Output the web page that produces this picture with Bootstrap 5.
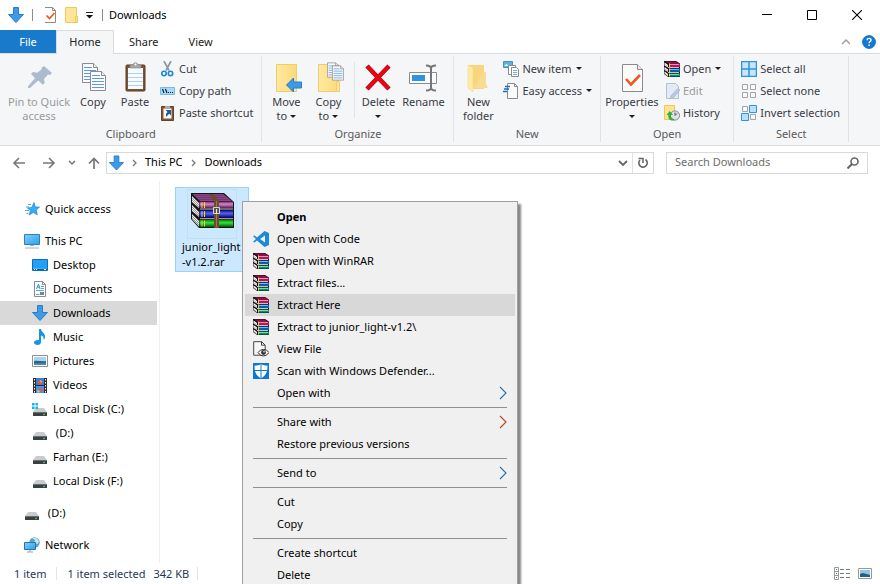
<!DOCTYPE html>
<html lang="en">
<head>
<meta charset="utf-8">
<meta name="viewport" content="width=device-width, initial-scale=1">
<title>Downloads</title>
<link href="https://cdn.jsdelivr.net/npm/bootstrap@5.3.0/dist/css/bootstrap.min.css" rel="stylesheet">
<style>
body { font-family: "Noto Sans", "Open Sans", sans-serif; font-size: 11px; line-height: 13px; color: #000; background: #fff; }
button, input { font: inherit; }
svg { display: block; flex: none; }
.plain { border: 0; background: none; padding: 0; color: inherit; }
.titlebar { height: 30px; padding: 0 1px 0 8px; }
.caption-text { padding: 0 0 2px 6px; }
.vline { width: 1px; height: 12px; background: #8c8c8c; }
.win-btn { width: 45px; height: 30px; }
.tab-row { height: 24px; box-shadow: inset 0 -1px #dadbdc; }
.tab-link { height: 23px; color: #222; text-decoration: none; display: flex; align-items: center; justify-content: center; padding: 0 15px; }
.tab-file { background: #1979ca; color: #fff; width: 56px; }
.tab-active { background: #f5f6f7; border: 1px solid #dadbdc; border-bottom: 0; height: 24px; width: 58px; padding: 0 0 2px; }
.ribbon { background: #f5f6f7; border-bottom: 1px solid #dadbdc; height: 92px; padding-top: 2px; color: #3a3a44; }
.ribbon-group { border-right: 1px solid #e2e3e4; height: 86px; display: flex; flex-direction: column; }
.ribbon-tools { height: 71px; padding: 2px 4px 0 3px; }
.group-name { text-align: center; color: #5a5a5a; line-height: 16px; }
.tool-big { display: flex; flex-direction: column; align-items: center; gap: 1px; text-align: center; padding-top: 2px; line-height: 14px; }
.w36 { width: 36px; } .w38 { width: 38px; } .w42 { width: 42px; } .w48 { width: 48px; } .w52 { width: 52px; } .w56 { width: 56px; } .w72 { width: 72px; }
.tool-small { display: flex; align-items: center; gap: 3px; height: 22px; padding-bottom: 2px; white-space: nowrap; }
.tool-small svg, .side a svg, .ctx-item svg { margin-top: 2px; }
.tool-off { color: #9a9a9a; }
.tool-line { width: 1px; height: 56px; background: #e2e3e4; margin: 4px 4px 0 5px; }
.caret { display: inline-block; border: 3px solid transparent; border-top-color: #1e1e1e; border-bottom: 0; vertical-align: 2px; margin-left: 3px; }
.tool-small .caret { margin-left: 1px; }
.addr-row { height: 35px; padding: 0 12px 2px; }
.addr-row a { padding-bottom: 2px; }
.addr-box { border: 1px solid #d9d9d9; height: 22px; }
.path-box { margin-left: 6px; padding-left: 2px; }
.search-box { width: 202px; margin-left: 12px; }
.search-box input { border: 0; outline: 0; min-width: 0; padding: 0 0 2px 8px; color: #000; }
.search-box input::placeholder { color: #6d6d6d; opacity: 1; }
.side { width: 160px; border-right: 1px solid #f0f0f0; padding-top: 16px; }
.side a { display: flex; align-items: center; gap: 5px; height: 24px; padding: 0 0 2px 32px; margin-right: 2px; color: #000; text-decoration: none; white-space: pre; }
.side a.top-level { padding-left: 24px; }
.side a.gap-above { margin-top: 8px; }
.side a.current { background: #d9d9d9; }
.files { padding: 6px 15px; }
.file-tile { width: 74px; border: 1px solid #99d1ff; background: #cce8ff; text-align: left; padding: 1px 0 2px 6px; line-height: 15px; }
.file-pic { border: 1px solid #c3def0; width: 50px; height: 50px; margin-left: 5px; padding: 3px 0 0 3px; }
.status { height: 21px; padding: 0 8px 0 14px; color: #1e395b; }
.status .vline { height: 13px; background: #e4e4e4; }
.status .first-line { margin: 0 10px; }
.ctx { position: absolute; left: 242px; top: 201px; width: 276px; background: #f0f0f0; border: 1px solid #a0a0a0; padding: 4px 2px 12px; box-shadow: 3px 3px 2px #00000078; }
.ctx-item { display: flex; align-items: center; gap: 8px; width: 100%; height: 22px; padding: 0 8px 2px; text-align: left; }
.ctx-item .slot { width: 16px; height: 16px; flex: none; }
.ctx-item.hot { background: #d8d8d8; }
.ctx hr { margin: 3px 8px; border-color: #8f8f8f; opacity: 1; }
</style>
<script src="https://cdn.jsdelivr.net/npm/bootstrap@5.3.0/dist/js/bootstrap.bundle.min.js"></script>
</head>
<body class="vh-100 overflow-hidden position-relative">
<svg width="0" height="0" class="position-absolute" aria-hidden="true">
<defs>
<linearGradient id="gBlue" x1="0" y1="0" x2="1" y2="1"><stop offset="0" stop-color="#7fd0fb"/><stop offset="1" stop-color="#2aa0ee"/></linearGradient>
<linearGradient id="gFold" x1="0" y1="0" x2="1" y2="0"><stop offset="0" stop-color="#ffe9a2"/><stop offset="1" stop-color="#fbd978"/></linearGradient>
<linearGradient id="gPurple" x1="0" y1="0" x2="0" y2="1"><stop offset="0" stop-color="#6d2468"/><stop offset=".4" stop-color="#d08ac8"/><stop offset="1" stop-color="#5c1856"/></linearGradient>
<linearGradient id="gNavy" x1="0" y1="0" x2="0" y2="1"><stop offset="0" stop-color="#1414a8"/><stop offset=".4" stop-color="#4f62ff"/><stop offset="1" stop-color="#08086a"/></linearGradient>
<linearGradient id="gGreen" x1="0" y1="0" x2="0" y2="1"><stop offset="0" stop-color="#0a860a"/><stop offset=".4" stop-color="#2fe83a"/><stop offset="1" stop-color="#045004"/></linearGradient>
<symbol id="down" viewBox="0 0 16 16"><path d="M5.5.5h5v7h5L8 15.5.5 7.5h5z" fill="#3c9be8" stroke="#2b7cc4"/></symbol>
<symbol id="books" viewBox="0 0 16 16">
<path d="M0 0h12l4 2.500V16H4l-4-3z" fill="#1a1014"/>
<path d="M1 .5h10.500l3.500 2H5z" fill="#8e1048"/>
<path d="M5 2.500h11V6H5z" fill="#b8145a"/><path d="M6 3h9v1H6z" fill="#f58ab4"/>
<path d="M5 7.500h11V11H5z" fill="#0d5cab"/><path d="M6 8h9v1H6z" fill="#6fbcf4"/>
<path d="M5 12.500h11v3H5z" fill="#0b8f63"/><path d="M6 13h9v1H6z" fill="#66e2b6"/>
<path d="M.5 1.500L4 4v2.500L.5 4.500zM.5 6L4 8.500V11L.5 9zM.5 10.500L4 13v2.500l-3.500-3z" fill="#fff"/>
<path d="M4 6.500h11M4 11.500h11" stroke="#f2f2f2" stroke-width=".8"/>
<path d="M5 2.500h1V6H5zM5 7.500h1V11H5zM5 12.500h1v3H5z" fill="#f5cf3b"/>
<path d="M0 3l4 2.500M0 7.500L4 10M0 12l4 2.500" stroke="#777" stroke-width=".5"/>
</symbol>
<symbol id="drive" viewBox="0 0 16 16"><path d="M4 7h8l3 4H1z" fill="#c9ccce"/><path d="M1 11h14v4H1z" fill="#3b3f42"/><path d="M1 11h14v1H1z" fill="#6b6f72"/><circle cx="12" cy="13.500" r=".8" fill="#53f05d"/></symbol>
<symbol id="page" viewBox="0 0 12 16"><path d="M.5.5h8l3 3v12H.5z" fill="#fff" stroke="#8b8b8b"/><path d="M8.500.5v3h3" fill="none" stroke="#8b8b8b"/></symbol>
<symbol id="sheet" viewBox="0 0 16 20"><path d="M.5.5h11l4 4v15H.5z" fill="#fbfbfb" stroke="#8b8b8b"/><path d="M11.500.5v4h4" fill="#eee" stroke="#8b8b8b"/><path d="M2 4.500h8M2 7.500h12M2 10.500h12M2 13.500h12M2 16.500h12" stroke="#5e97e4"/></symbol>
<symbol id="chev" viewBox="0 0 8 14"><path d="M1 1l6 6-6 6" fill="none" stroke="currentColor" stroke-width="1.100"/></symbol>
</defs>
</svg>

<div class="d-flex flex-column h-100">
<header class="titlebar d-flex align-items-center">
  <svg width="16" height="16"><use href="#down"/></svg>
  <span class="vline ms-2"></span>
  <button class="plain ms-2 ps-1" aria-label="Properties"><svg width="11" height="16"><use href="#page" x="-1" width="12" height="16"/><path d="M1.500 8.500l3 3 5-5.500" fill="none" stroke="#e8541e" stroke-width="1.700"/></svg></button>
  <button class="plain ms-2" aria-label="New folder"><svg width="14" height="16"><path d="M1.500.5h11v15h-11z" fill="#ffe59a" stroke="#efc95c"/><path d="M11.500 9.500h2v6h-2z" fill="#ffe59a" stroke="#efc95c"/></svg></button>
  <button class="plain ms-2" aria-label="Customize Quick Access Toolbar"><svg width="8" height="8"><path d="M0 1.500h7" stroke="#222"/><path d="M0 4h7l-3.500 3.500z" fill="#111"/></svg></button>
  <span class="vline ms-2"></span>
  <span class="caption-text me-auto">Downloads</span>
  <button class="plain win-btn d-flex align-items-center justify-content-center" aria-label="Minimize"><svg width="10" height="10"><path d="M0 4.500h10" stroke="#000"/></svg></button>
  <button class="plain win-btn d-flex align-items-center justify-content-center" aria-label="Maximize"><svg width="10" height="10"><path d="M.5.5h9v9h-9z" fill="none" stroke="#000"/></svg></button>
  <button class="plain win-btn d-flex align-items-center justify-content-center" aria-label="Close"><svg width="10" height="10"><path d="M0 0l10 10M10 0L0 10" stroke="#000" stroke-width="1.100"/></svg></button>
</header>

<nav class="tab-row d-flex" aria-label="Ribbon tabs">
  <a class="tab-link tab-file" href="#">File</a>
  <a class="tab-link tab-active" href="#">Home</a>
  <a class="tab-link" href="#">Share</a>
  <a class="tab-link" href="#">View</a>
  <button class="plain ms-auto me-2 pe-1" aria-label="Collapse ribbon"><svg width="9" height="8"><path d="M1 6l4-4 4 4" fill="none" stroke="#9a9a9a" stroke-width="1.400"/></svg></button>
  <button class="plain me-1" aria-label="Help"><svg width="14" height="14"><circle cx="7" cy="7" r="6.500" fill="#0f7ad8" stroke="#0a5ea9" stroke-width=".7"/><path d="M5 5.200c.2-2.600 4.200-2.300 4 0-.1 1.300-1.900 1.400-1.900 3M7.100 9.600v1.500" fill="none" stroke="#fff" stroke-width="1.400"/></svg></button>
</nav>

<section class="ribbon d-flex flex-shrink-0" aria-label="Home ribbon">
  <div class="ribbon-group">
    <div class="ribbon-tools d-flex align-items-start">
      <button class="plain tool-big w72 tool-off"><svg width="32" height="34"><path d="M21 6l8 7-2 2-2-.6-4 4.600.8 4-2 1.800-4.600-4.400L7 28H5l0-1.800 7-8-4-4.400 2-1.800 4.200.8 4.600-3.600-.2-1.400z" fill="#adbbcf"/></svg><span>Pin to Quick<br>access</span></button>
      <button class="plain tool-big w36"><svg width="32" height="34"><use href="#sheet" x="5" y="3" width="16" height="20"/><use href="#sheet" x="13" y="11" width="16" height="20"/></svg>Copy</button>
      <button class="plain tool-big w48"><svg width="32" height="34"><rect x="7" y="5" width="19" height="26" rx="1" fill="#7b5534" stroke="#5c3c20"/><path d="M9 8h15v21H9z" fill="#f8fbfd"/><path d="M9 13.500h15M9 17.500h15M9 21.500h15M9 25.500h15" stroke="#a9d4ec"/><path d="M11 8V5h3c0-3 5-3 5 0h3v3z" fill="#a5a8ab" stroke="#85888b" stroke-width=".6"/><circle cx="16.500" cy="4.500" r="1" fill="#fff"/></svg>Paste</button>
      <div class="pe-1">
        <button class="plain tool-small"><svg width="17" height="16"><path d="M5 0l5 9.500M12 0L7 9.500" stroke="#8a97a5" stroke-width="1.700"/><circle cx="5" cy="12.500" r="2.200" fill="none" stroke="#1988cf" stroke-width="1.600"/><circle cx="11.500" cy="12.500" r="2.200" fill="none" stroke="#1988cf" stroke-width="1.600"/></svg>Cut</button>
        <button class="plain tool-small"><svg width="17" height="16"><path d="M1.500 4.500h14v7h-14z" fill="#a9d9f8" stroke="#79b9e2"/><path d="M3.500 6l1.500 4M6.500 6L8 10" stroke="#123" stroke-width="1.200"/><path d="M9 9.500h1M11 9.500h1M13 9.500h1" stroke="#123"/></svg>Copy path</button>
        <button class="plain tool-small"><svg width="17" height="16"><path d="M2.500 1.500h12v14h-12z" fill="#80573a" stroke="#63432b"/><path d="M4.500 3.500h8v10h-8z" fill="#fff"/><path d="M6 3V1h5v2z" fill="#aaa"/><path d="M6.500 5H12v5.500l-1.800-1.700L7 12V8.800l1.500-1.900z" fill="#29599c"/></svg>Paste shortcut</button>
      </div>
    </div>
    <div class="group-name">Clipboard</div>
  </div>

  <div class="ribbon-group">
    <div class="ribbon-tools d-flex align-items-start">
      <button class="plain tool-big w42"><svg width="32" height="34"><path d="M6.500 4.500h20v27h-20z" fill="url(#gFold)" stroke="#efcc6d"/><path d="M23.500 20.500h3v11h-3z" fill="#ffe59a" stroke="#efcc6d"/><path d="M16.500 25l7-7v4h8v6h-8v4z" fill="#3c9be8" stroke="#2b7cc4"/></svg><span>Move<br>to<span class="caret"></span></span></button>
      <button class="plain tool-big w42"><svg width="32" height="34"><path d="M6.500 4.500h20v27h-20z" fill="url(#gFold)" stroke="#efcc6d"/><path d="M24.500 21.500h3v10h-3z" fill="#ffe59a" stroke="#efcc6d"/><use href="#sheet" x="15" y="2" width="12" height="16"/><use href="#sheet" x="20" y="5" width="12" height="16"/></svg><span>Copy<br>to<span class="caret"></span></span></button>
      <span class="tool-line"></span>
      <button class="plain tool-big w38"><svg width="32" height="34"><path d="M5 6l22 23M27 6L5 29" stroke="#b5000c" stroke-width="4.500"/><path d="M5.500 6.500l21 22M26.500 6.500l-21 22" stroke="#e60614" stroke-width="3.500"/></svg><span>Delete<br><span class="caret m-0"></span></span></button>
      <button class="plain tool-big w52"><svg width="32" height="34"><path d="M2.500 12.500h27v11h-27z" fill="#fcfcfc" stroke="#8c8c8c"/><path d="M5 15h13v6H5z" fill="#2f92e4"/><path d="M19 5.500c3 0 5 .5 5 3 0-2.500 2-3 5-3M24 8v20M19 30.500c3 0 5-.5 5-3 0 2.500 2 3 5 3" fill="none" stroke="#767676" stroke-width="2"/></svg>Rename</button>
    </div>
    <div class="group-name">Organize</div>
  </div>

  <div class="ribbon-group">
    <div class="ribbon-tools d-flex align-items-start">
      <button class="plain tool-big w42"><svg width="32" height="34"><path d="M7 5h15v24H7z" fill="#f9d67b"/><path d="M21 12h3v12l2 4H12z" fill="#f8dc91"/><path d="M6 5l5 3v24l-5-4z" fill="#ffeaa9" stroke="#f6d880" stroke-width=".6"/></svg><span>New<br>folder</span></button>
      <div class="ps-1 pe-1">
        <button class="plain tool-small"><svg width="16" height="16"><path d="M.5.5h9v6h-9z" fill="#5bb3e4" stroke="#4a90b8"/><path d="M1 5l2.500-2L6 5z" fill="#e7f7ff"/><path d="M5.500 4.500h7v9h-7z" fill="#fff" stroke="#8b8b8b"/><path d="M8.500 6.500h5l2 2v7h-7z" fill="#fff" stroke="#8b8b8b"/><path d="M10 9.500h4M10 11.500h4M10 13.500h4" stroke="#7aa9e6"/></svg>New item <span class="caret"></span></button>
        <button class="plain tool-small"><svg width="16" height="16"><path d="M4.500.5h7l3 3v12h-10z" fill="#fafafa" stroke="#8b8b8b"/><path d="M11.500.5v3h3" fill="none" stroke="#8b8b8b"/><path d="M2 3.500h5M1 6h5M0 8.500h4" stroke="#1b6eb8" stroke-width="1.300"/></svg>Easy access <span class="caret"></span></button>
      </div>
    </div>
    <div class="group-name">New</div>
  </div>

  <div class="ribbon-group">
    <div class="ribbon-tools d-flex align-items-start">
      <button class="plain tool-big w56"><svg width="32" height="34"><path d="M6.500 4.500h15l5 5v22h-20z" fill="#fbfbfb" stroke="#8b8b8b"/><path d="M21.500 4.500v5h5" fill="#e8e8e8" stroke="#8b8b8b"/><path d="M10 19l5 5.500 9-9.500" fill="none" stroke="#f2581c" stroke-width="2.600"/></svg><span>Properties<br><span class="caret m-0"></span></span></button>
      <div class="ps-1 pe-2">
        <button class="plain tool-small"><svg width="16" height="16"><use href="#books"/></svg>Open <span class="caret"></span></button>
        <button class="plain tool-small tool-off"><svg width="16" height="16"><path d="M2.500.5h9l3 3v12h-12z" fill="#e3eaf5" stroke="#b3c1d8"/><path d="M14 5.500l2 1.500-6.500 7.500-3 1 .7-3z" fill="#b9c9e2" stroke="#9fb2d0" stroke-width=".7"/></svg>Edit</button>
        <button class="plain tool-small"><svg width="16" height="16"><path d="M.5.5h10v14H.5z" fill="#ffe48f" stroke="#e9c765"/><circle cx="11" cy="10.500" r="4.600" fill="#dfe2e4" stroke="#8a8d90"/><path d="M11 7.500v3l2-2" fill="none" stroke="#555"/><path d="M10 15.500C5 16 3.800 12.500 4.500 10H2.500l3.200-4L9 10H7c-.4 2 .5 3.800 3 4z" fill="#2faf3c"/></svg>History</button>
      </div>
    </div>
    <div class="group-name">Open</div>
  </div>

  <div class="ribbon-group">
    <div class="ribbon-tools d-flex align-items-start">
      <div class="ps-1 pe-1">
        <button class="plain tool-small"><svg width="16" height="16"><path d="M.5.5h15v15H.5zM8 .5v15M.5 8h15" fill="#c8e5fb" stroke="#2f92e0" stroke-width="1.500"/></svg>Select all</button>
        <button class="plain tool-small"><svg width="16" height="16"><path d="M1.500 1.500h5v5h-5zM9.500 1.500h5v5h-5zM1.500 9.500h5v5h-5zM9.500 9.500h5v5h-5z" fill="#fafafa" stroke="#a3a3a3"/></svg>Select none</button>
        <button class="plain tool-small"><svg width="16" height="16"><path d="M1.500 1.500h5v5h-5zM9.500 9.500h5v5h-5z" fill="#fafafa" stroke="#a3a3a3"/><path d="M8.500.5h7v7h-7zM.5 8.500h7v7h-7z" fill="#b9dffc" stroke="#2f92e0"/></svg>Invert selection</button>
      </div>
    </div>
    <div class="group-name">Select</div>
  </div>
</section>

<div class="addr-row d-flex align-items-center flex-shrink-0">
  <button class="plain" aria-label="Back"><svg width="14" height="12"><path d="M13 6H2M7 1L2 6l5 5" fill="none" stroke="#777" stroke-width="1.600"/></svg></button>
  <button class="plain ms-3" aria-label="Forward"><svg width="14" height="12"><path d="M1 6h11M7 1l5 5-5 5" fill="none" stroke="#777" stroke-width="1.600"/></svg></button>
  <button class="plain ms-2 ps-1" aria-label="Recent locations"><svg width="8" height="6"><path d="M1 1l3 3 3-3" fill="none" stroke="#777" stroke-width="1.500"/></svg></button>
  <button class="plain ms-2 ps-1" aria-label="Up"><svg width="12" height="12"><path d="M6 12V2M1 6.500l5-5 5 5" fill="none" stroke="#777" stroke-width="1.700"/></svg></button>
  <div class="addr-box path-box d-flex align-items-center flex-grow-1">
    <svg width="15" height="16"><use href="#down"/></svg>
    <svg class="mx-2" width="5" height="8"><path d="M1 1l3 3-3 3" fill="none" stroke="#777" stroke-width="1.300"/></svg>
    <a href="#" class="text-black text-decoration-none">This PC</a>
    <svg class="mx-2" width="6" height="8"><path d="M1 1l3 3-3 3" fill="none" stroke="#777" stroke-width="1.300"/></svg>
    <a href="#" class="text-black text-decoration-none me-auto">Downloads</a>
    <button class="plain px-1" aria-label="Previous locations"><svg width="10" height="8"><path d="M1 2l4 4 4-4" fill="none" stroke="#666" stroke-width="1.800"/></svg></button>
    <button class="plain px-1 h-100 border-start" aria-label="Refresh"><svg width="12" height="12"><path d="M8.500 2.500A4.200 4.200 0 1 1 3 3" fill="none" stroke="#666" stroke-width="1.600"/><path d="M1.500 1.500h4.500V6" fill="none" stroke="#666" stroke-width="1.500"/></svg></button>
  </div>
  <label class="addr-box search-box d-flex align-items-center pe-2">
    <input class="flex-grow-1" type="search" placeholder="Search Downloads" aria-label="Search Downloads">
    <svg width="12" height="12"><circle cx="7.500" cy="4.500" r="3.500" fill="none" stroke="#666" stroke-width="1.600"/><path d="M5 7l-4.500 4.500" stroke="#666" stroke-width="2"/></svg>
  </label>
</div>

<main class="d-flex flex-grow-1 overflow-hidden">
  <nav class="side flex-shrink-0" aria-label="Locations">
    <a class="top-level" href="#"><svg width="16" height="16"><path d="M10 1.500l1.200 4.400 4.300.2-3.300 3 1.100 4.700-4-2.400L5.200 14l1.200-4.400L3.500 7l4.300-.6z" fill="#35aef2" stroke="#1d84cb" stroke-width=".7"/><path d="M4 3.500h3M2 6h3M1 9.500h4M2.500 12.500h2" stroke="#4da9df"/></svg>Quick access</a>
    <a class="top-level gap-above" href="#"><svg width="16" height="16"><path d="M.5 1.500h15v10H.5z" fill="url(#gBlue)" stroke="#357fae"/><path d="M6 12.500h4M1 15h14" stroke="#9bb0bf"/></svg>This PC</a>
    <a href="#"><svg width="16" height="16"><path d="M.5 2.500h15v11H.5z" fill="url(#gBlue)" stroke="#0c6eb8"/><path d="M1 3h14v8H1z" fill="#1fa2f6"/><path d="M1 12.500h14" stroke="#0b5f9f"/><path d="M2 12.500h1M4 12.500h1M12 12.500h2" stroke="#fff"/></svg>Desktop</a>
    <a href="#"><svg width="16" height="16"><use href="#page" x="2" y="0" width="12" height="16"/><path d="M4.500 8l2-5 1.500 5M5 6h2.500" fill="none" stroke="#2f92d8"/><path d="M9 5.500h3M9 7.500h3M4 9.500h8M4 13.500h3.500" stroke="#52aadf"/><path d="M8 11h4v3H8z" fill="#6b8d7f"/></svg>Documents</a>
    <a class="current" href="#"><svg width="16" height="16"><use href="#down"/></svg>Downloads</a>
    <a href="#"><svg width="16" height="16"><path d="M7 0h2c0 3 4.500 4 4 8-.2 1.500-.8 2.500-1.500 3 .7-3-1-4-2.500-4.500V13c0 2-1.500 3-3.500 3S2 15 2 13.500 4 10.700 7 11z" fill="#1593e6"/></svg>Music</a>
    <a href="#"><svg width="16" height="16"><path d="M.5 2.500h15v11H.5z" fill="#fff" stroke="#8f8f8f"/><path d="M2 4h12v8H2z" fill="#a8d3f5"/><path d="M2 8c4-1 8 1 12 0v2H2z" fill="#2e6b68"/><path d="M2 10h12v2H2z" fill="#3f86c5"/></svg>Pictures</a>
    <a href="#"><svg width="16" height="16"><path d="M1 1h14v15H1z" fill="#2d2d2d"/><path d="M4 1h8v7H4z" fill="#3c7be0"/><path d="M4 9h8v7H4z" fill="#4e8ff0"/><path d="M5 5l3-2 3 3-3 1.500zM7 12l3-2 1 4H8z" fill="#e2602a"/><path d="M8 3l2 1-1 2zM5 13l3 1-2 2z" fill="#f2d23b"/><path d="M2.500 2v14M13.500 2v14" stroke="#fff" stroke-dasharray="1.500 1.500"/></svg>Videos</a>
    <a href="#"><svg width="16" height="16"><use href="#drive"/><path d="M0 2h2.600v2.500H0zM3.500 2H6v2.500H3.500zM0 5.500h2.600V8H0zM3.500 5.500H6V8H3.500z" fill="#16b1f2"/></svg>Local Disk (C:)</a>
    <a href="#"><svg width="16" height="16"><use href="#drive"/></svg> (D:)</a>
    <a href="#"><svg width="16" height="16"><use href="#drive"/></svg>Farhan (E:)</a>
    <a href="#"><svg width="16" height="16"><use href="#drive"/></svg>Local Disk (F:)</a>
    <a class="top-level gap-above" href="#"><svg width="16" height="16"><use href="#drive"/></svg> (D:)</a>
    <a class="top-level gap-above" href="#"><svg width="16" height="16"><circle cx="10.500" cy="5.500" r="5.200" fill="#5a9fc4"/><path d="M8 1l3 2-1 3 4 1 1-3-3-3.500z" fill="#c5e5f3"/><path d="M.5 5.500h11v7H.5z" fill="url(#gBlue)" stroke="#2874a8"/><path d="M3 15h6M6 13v2" stroke="#8aa7ba"/></svg>Network</a>
  </nav>
  <div class="files flex-grow-1">
    <button class="plain file-tile d-block"><span class="file-pic d-block"><svg width="43" height="36" viewBox="0 0 43 36">
      <path d="M0 0h33l10 9v26H8L0 26z" fill="#1b1414"/>
      <path d="M1.500 1H32l9 7H9z" fill="#8a4585"/><path d="M4 2.500h28M6 4.500h29M8 6.500h30" stroke="#6f2d6b" stroke-width=".7"/>
      <path d="M8.500 8.500H42v6.500H8.500z" fill="url(#gPurple)"/>
      <path d="M8.500 17.500H42v7H8.500z" fill="url(#gNavy)"/>
      <path d="M8.500 27H42v7H8.500z" fill="url(#gGreen)"/>
      <path d="M1 3l7 7v5L1 9zM1 12l7 7v5l-7-6zM1 21l7 7v5.500L1 26z" fill="#ececec"/>
      <path d="M1 5l7 7M1 7l7 7M1 14l7 7M1 16l7 7M1 23l7 7M1 25l7 7" stroke="#777" stroke-width=".7"/>
      <path d="M9 16h33M9 25.700h33" stroke="#bfb8c0"/>
      <path d="M11 9v6M13.500 9v6M11 18v6M13.500 18v6M11 27.500v6M13.500 27.500v6" stroke="#f1d23a"/>
      <path d="M18 1h4l6 7v7h-5V8z" fill="#6c4a2d"/><path d="M23 20h5v15h-5z" fill="#6c4a2d"/><path d="M25.500 8v26" stroke="#a37748"/>
      <path d="M22.500 14.500h6v6h-6z" fill="#55504a" stroke="#d8d8d0"/><path d="M25.500 16v4" stroke="#e8e8e0" stroke-width="1.200"/>
    </svg></span>junior_light<br>-v1.2.rar</button>
  </div>
</main>

<footer class="status d-flex align-items-center flex-shrink-0">
  <span>1 item</span><span class="vline first-line"></span><span>1 item selected</span><span class="ms-2">342 KB</span><span class="vline ms-2"></span>
  <button class="plain ms-auto me-2" aria-label="Details view"><svg width="16" height="13"><path d="M.5.5h4v12h-4zM.5 4.500h4M.5 8.500h4" fill="none" stroke="#999"/><path d="M2 2.500h1" stroke="#3c9b55"/><path d="M2 6.500h1" stroke="#27d"/><path d="M2 10.500h1" stroke="#d33"/><path d="M6 2.500h4M12 2.500h4M6 6.500h4M12 6.500h4M6 10.500h4M12 10.500h4" stroke="#777"/></svg></button>
  <button class="plain" aria-label="Large icons view"><svg width="14" height="11"><path d="M.5.5h13v10H.5z" fill="#fff" stroke="#999"/><path d="M2 2h10v7H2z" fill="#8cc4f2"/><path d="M2 6l3-1 7 2v2H2z" fill="#286078"/></svg></button>
</footer>
</div>

<div class="ctx" role="menu">
  <button class="plain ctx-item fw-bold" role="menuitem"><span class="slot"></span>Open</button>
  <button class="plain ctx-item" role="menuitem"><svg width="16" height="16"><path d="M11.500 0L16 2v12l-4.500 2L4 9.500 1.500 11.500 0 10.700 3 8 0 5.300l1.500-.8L4 6.500zM12 4.500L7 8l5 3.500z" fill="#1c8ad6" fill-rule="evenodd"/></svg>Open with Code</button>
  <button class="plain ctx-item" role="menuitem"><svg width="16" height="16"><use href="#books"/></svg>Open with WinRAR</button>
  <button class="plain ctx-item" role="menuitem"><svg width="16" height="16"><use href="#books"/></svg>Extract files...</button>
  <button class="plain ctx-item hot" role="menuitem"><svg width="16" height="16"><use href="#books"/></svg>Extract Here</button>
  <button class="plain ctx-item" role="menuitem"><svg width="16" height="16"><use href="#books"/></svg>Extract to junior_light-v1.2\</button>
  <button class="plain ctx-item" role="menuitem"><svg width="16" height="16"><path d="M.7.7h8l3.500 3.500v10H.7z" fill="#f6f6f6" stroke="#444"/><path d="M8.500.7v3.500h3.500" fill="none" stroke="#444"/><path d="M5 11.500c3-4 8-4 11 0-3 4.500-8 4.500-11 0z" fill="#f4f4f4" stroke="#333"/><circle cx="10.500" cy="11.500" r="2.400" fill="#333"/><circle cx="11" cy="10.700" r=".8" fill="#fff"/></svg>View File</button>
  <button class="plain ctx-item" role="menuitem"><svg width="16" height="16"><path d="M0 0h16v16H0z" fill="#0a78d7"/><path d="M8 1c1.500 1.200 4 1.700 6.500 1.700C14.500 9 13 12.500 8 15.200 3 12.500 1.500 9 1.500 2.700 4 2.700 6.500 2.200 8 1z" fill="#fff"/><path d="M8 1v14.500M1 7.500h14" stroke="#0a78d7"/></svg>Scan with Windows Defender...</button>
  <button class="plain ctx-item" role="menuitem"><span class="slot"></span><span class="me-auto">Open with</span><svg width="8" height="14" color="#1f74b0"><use href="#chev"/></svg></button>
  <hr>
  <button class="plain ctx-item" role="menuitem"><span class="slot"></span><span class="me-auto">Share with</span><svg width="8" height="14" color="#b0491f"><use href="#chev"/></svg></button>
  <button class="plain ctx-item" role="menuitem"><span class="slot"></span>Restore previous versions</button>
  <hr>
  <button class="plain ctx-item" role="menuitem"><span class="slot"></span><span class="me-auto">Send to</span><svg width="8" height="14" color="#1f74b0"><use href="#chev"/></svg></button>
  <hr>
  <button class="plain ctx-item" role="menuitem"><span class="slot"></span>Cut</button>
  <button class="plain ctx-item" role="menuitem"><span class="slot"></span>Copy</button>
  <hr>
  <button class="plain ctx-item" role="menuitem"><span class="slot"></span>Create shortcut</button>
  <button class="plain ctx-item" role="menuitem"><span class="slot"></span>Delete</button>
</div>
</body>
</html>
